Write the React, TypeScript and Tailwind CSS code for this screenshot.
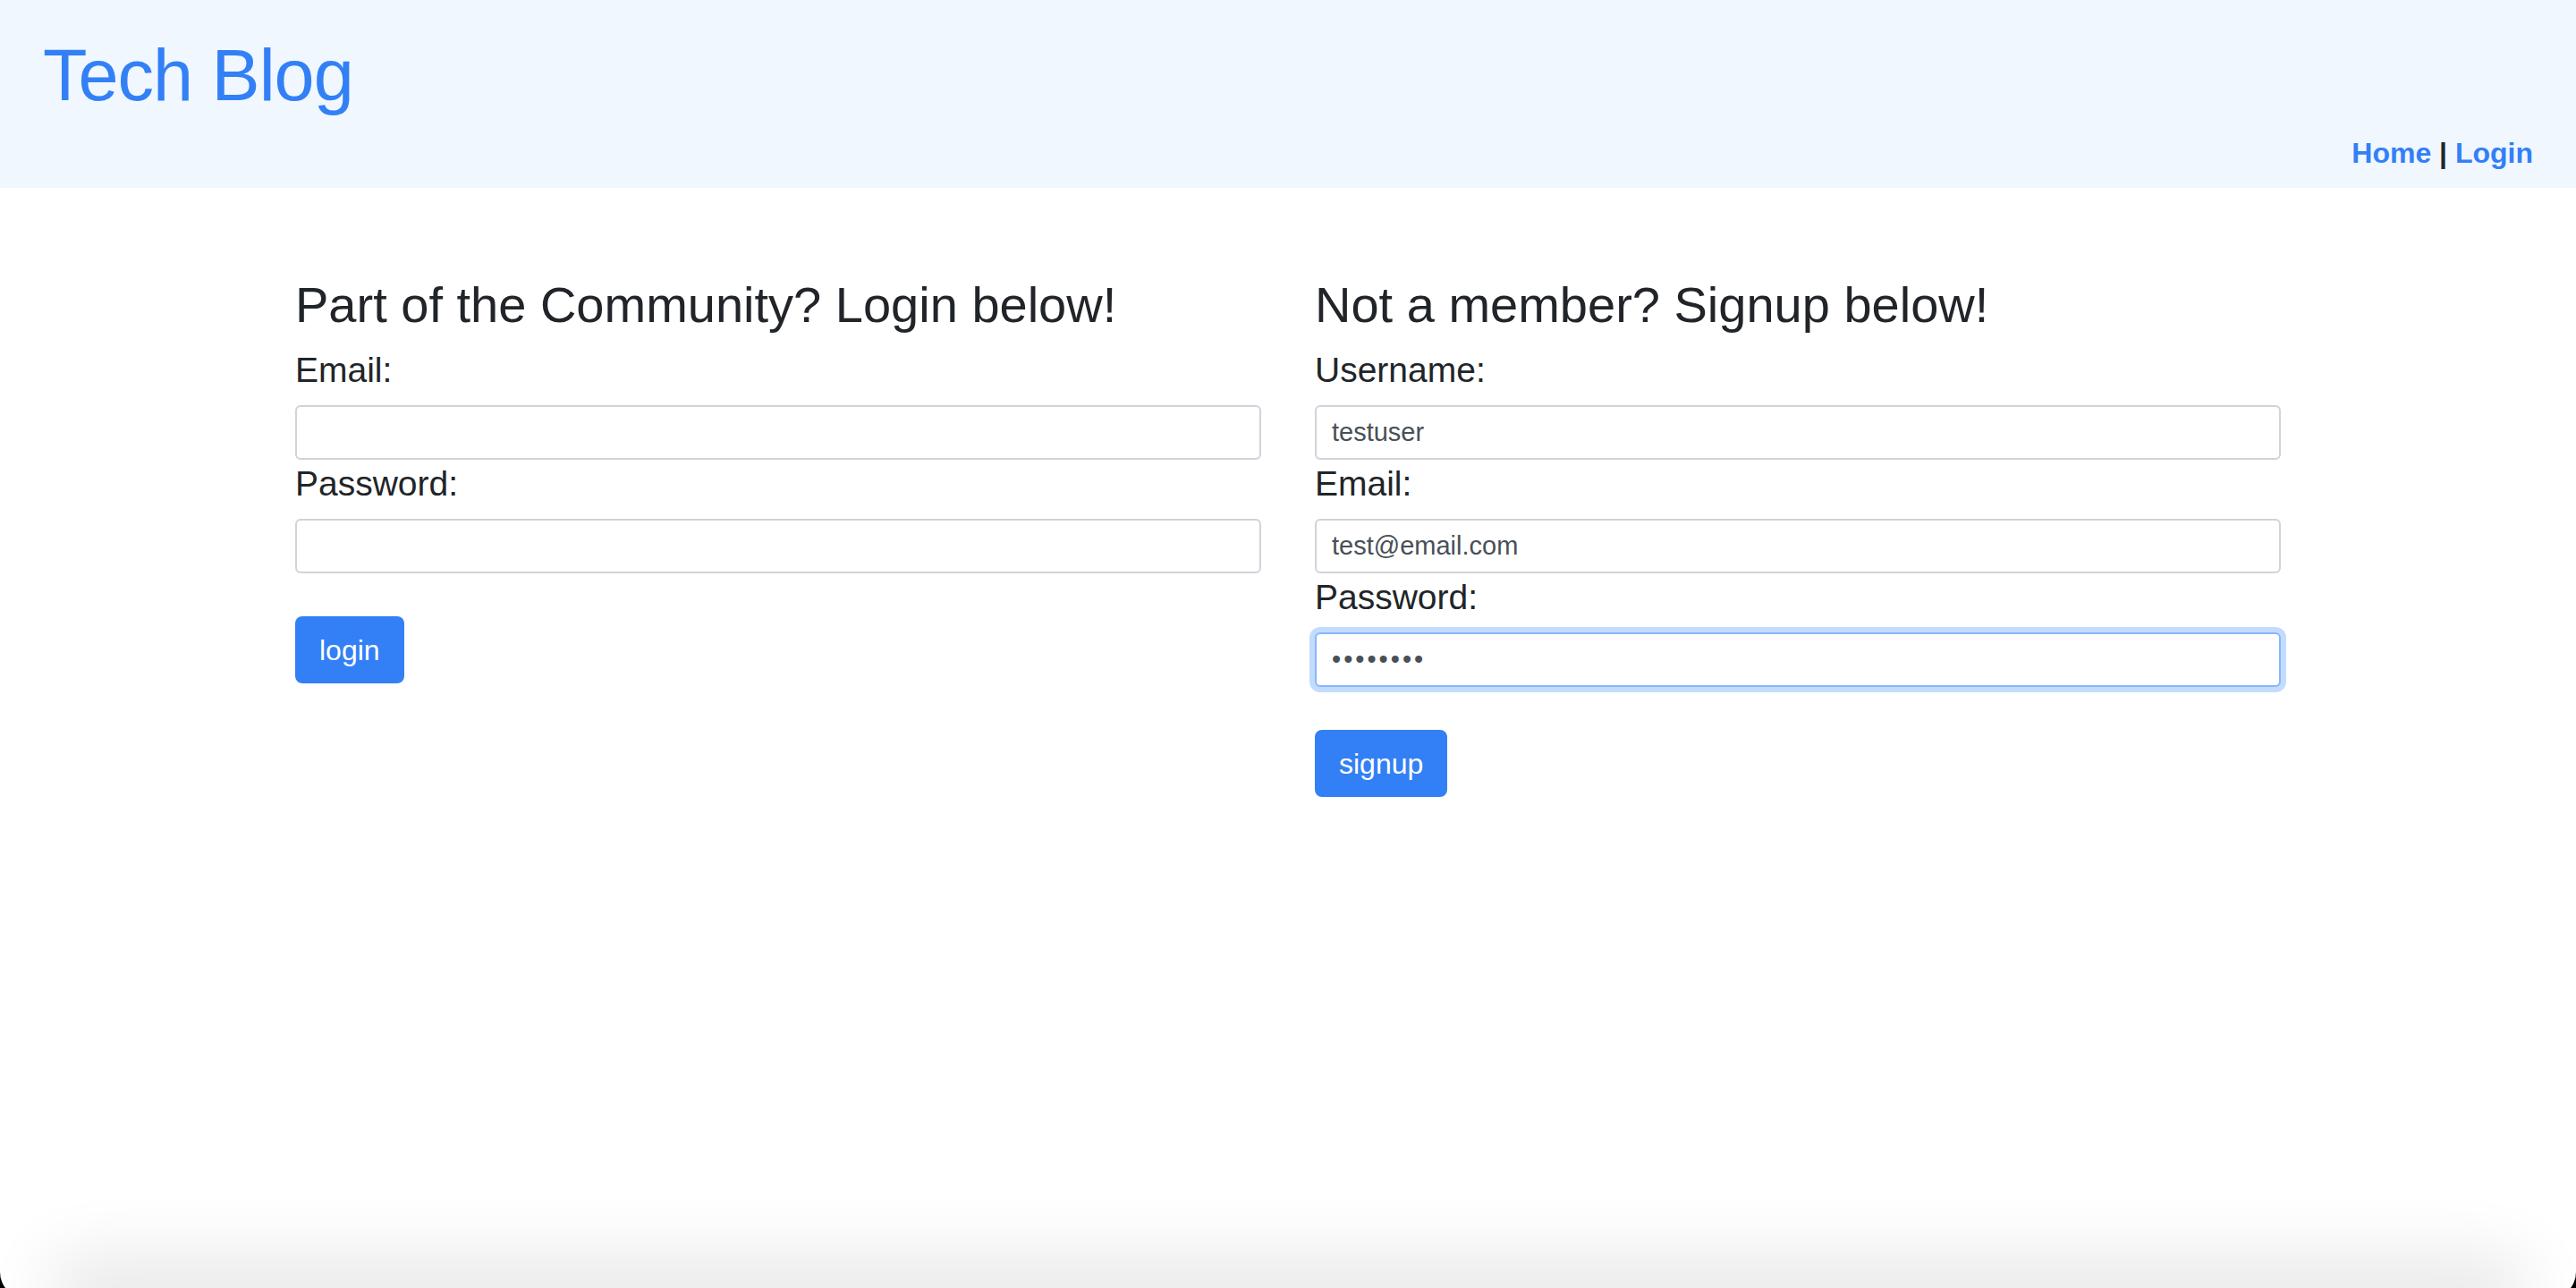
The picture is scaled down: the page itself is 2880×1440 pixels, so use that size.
import { useState } from "react";

const FONT = { fontFamily: '"Liberation Sans", Arial, sans-serif' };

function Field({
  label,
  type = "text",
  value = "",
  focused = false,
}: {
  label: string;
  type?: string;
  value?: string;
  focused?: boolean;
}) {
  const [val, setVal] = useState(value);
  return (
    <div className="flex flex-col mb-[3px]">
      <label className="text-[39px] leading-[47px] text-[#212529] mb-[16px]">{label}</label>
      <input
        type={type}
        value={val}
        onChange={e => setVal(e.target.value)}
        className={`h-[61px] w-full rounded-[6px] border-2 bg-white px-[17px] text-[29px] text-[#495057] outline-none ${
          focused
            ? "border-[#86b7fe] shadow-[0_0_0_6px_#c3dbfd] tracking-[3px]"
            : "border-[#ced4da]"
        }`}
      />
    </div>
  );
}

function SubmitButton({ children }: { children: string }) {
  return (
    <button
      type="button"
      className="mt-[45px] self-start h-[75px] px-[27px] rounded-[8px] bg-[#3380f6] text-white text-[32px] leading-none"
    >
      {children}
    </button>
  );
}

export default function App() {
  return (
    <div className="h-screen overflow-hidden bg-black" style={FONT}>
      <div className="h-[1452px] rounded-b-[30px] overflow-hidden bg-white flex flex-col">
        {/* Header */}
        <header className="h-[210px] shrink-0 bg-[#f0f7fe] px-[48px] flex justify-between">
          <h1 className="pt-[44px] text-[81px] leading-[80px] tracking-[-1px] text-[#3380f6] self-start">
            Tech Blog
          </h1>
          <nav className="self-end pb-[20px] text-[32px] leading-[38px] font-bold text-[#212529]">
            <a href="#" className="text-[#3380f6]">Home</a>
            {" | "}
            <a href="#" className="text-[#3380f6]">Login</a>
          </nav>
        </header>

        {/* Forms */}
        <main className="flex-1">
          <div className="w-[2220px] mx-auto pt-[97px] grid grid-cols-2 gap-[60px]">
            <section className="flex flex-col">
              <h2 className="text-[56px] leading-[67px] text-[#212529] mb-[16px]">
                Part of the Community? Login below!
              </h2>
              <Field label="Email:" />
              <Field label="Password:" type="password" />
              <SubmitButton>login</SubmitButton>
            </section>

            <section className="flex flex-col">
              <h2 className="text-[56px] leading-[67px] text-[#212529] mb-[16px]">
                Not a member? Signup below!
              </h2>
              <Field label="Username:" value="testuser" />
              <Field label="Email:" value="test@email.com" />
              <Field label="Password:" type="password" value="password" focused />
              <SubmitButton>signup</SubmitButton>
            </section>
          </div>
        </main>

        {/* bottom edge shadow */}
        <div className="shrink-0 h-[12px] mx-[90px] bg-[#e2e2e2] shadow-[0_0_80px_30px_rgba(0,0,0,0.11)]" />
      </div>
    </div>
  );
}
